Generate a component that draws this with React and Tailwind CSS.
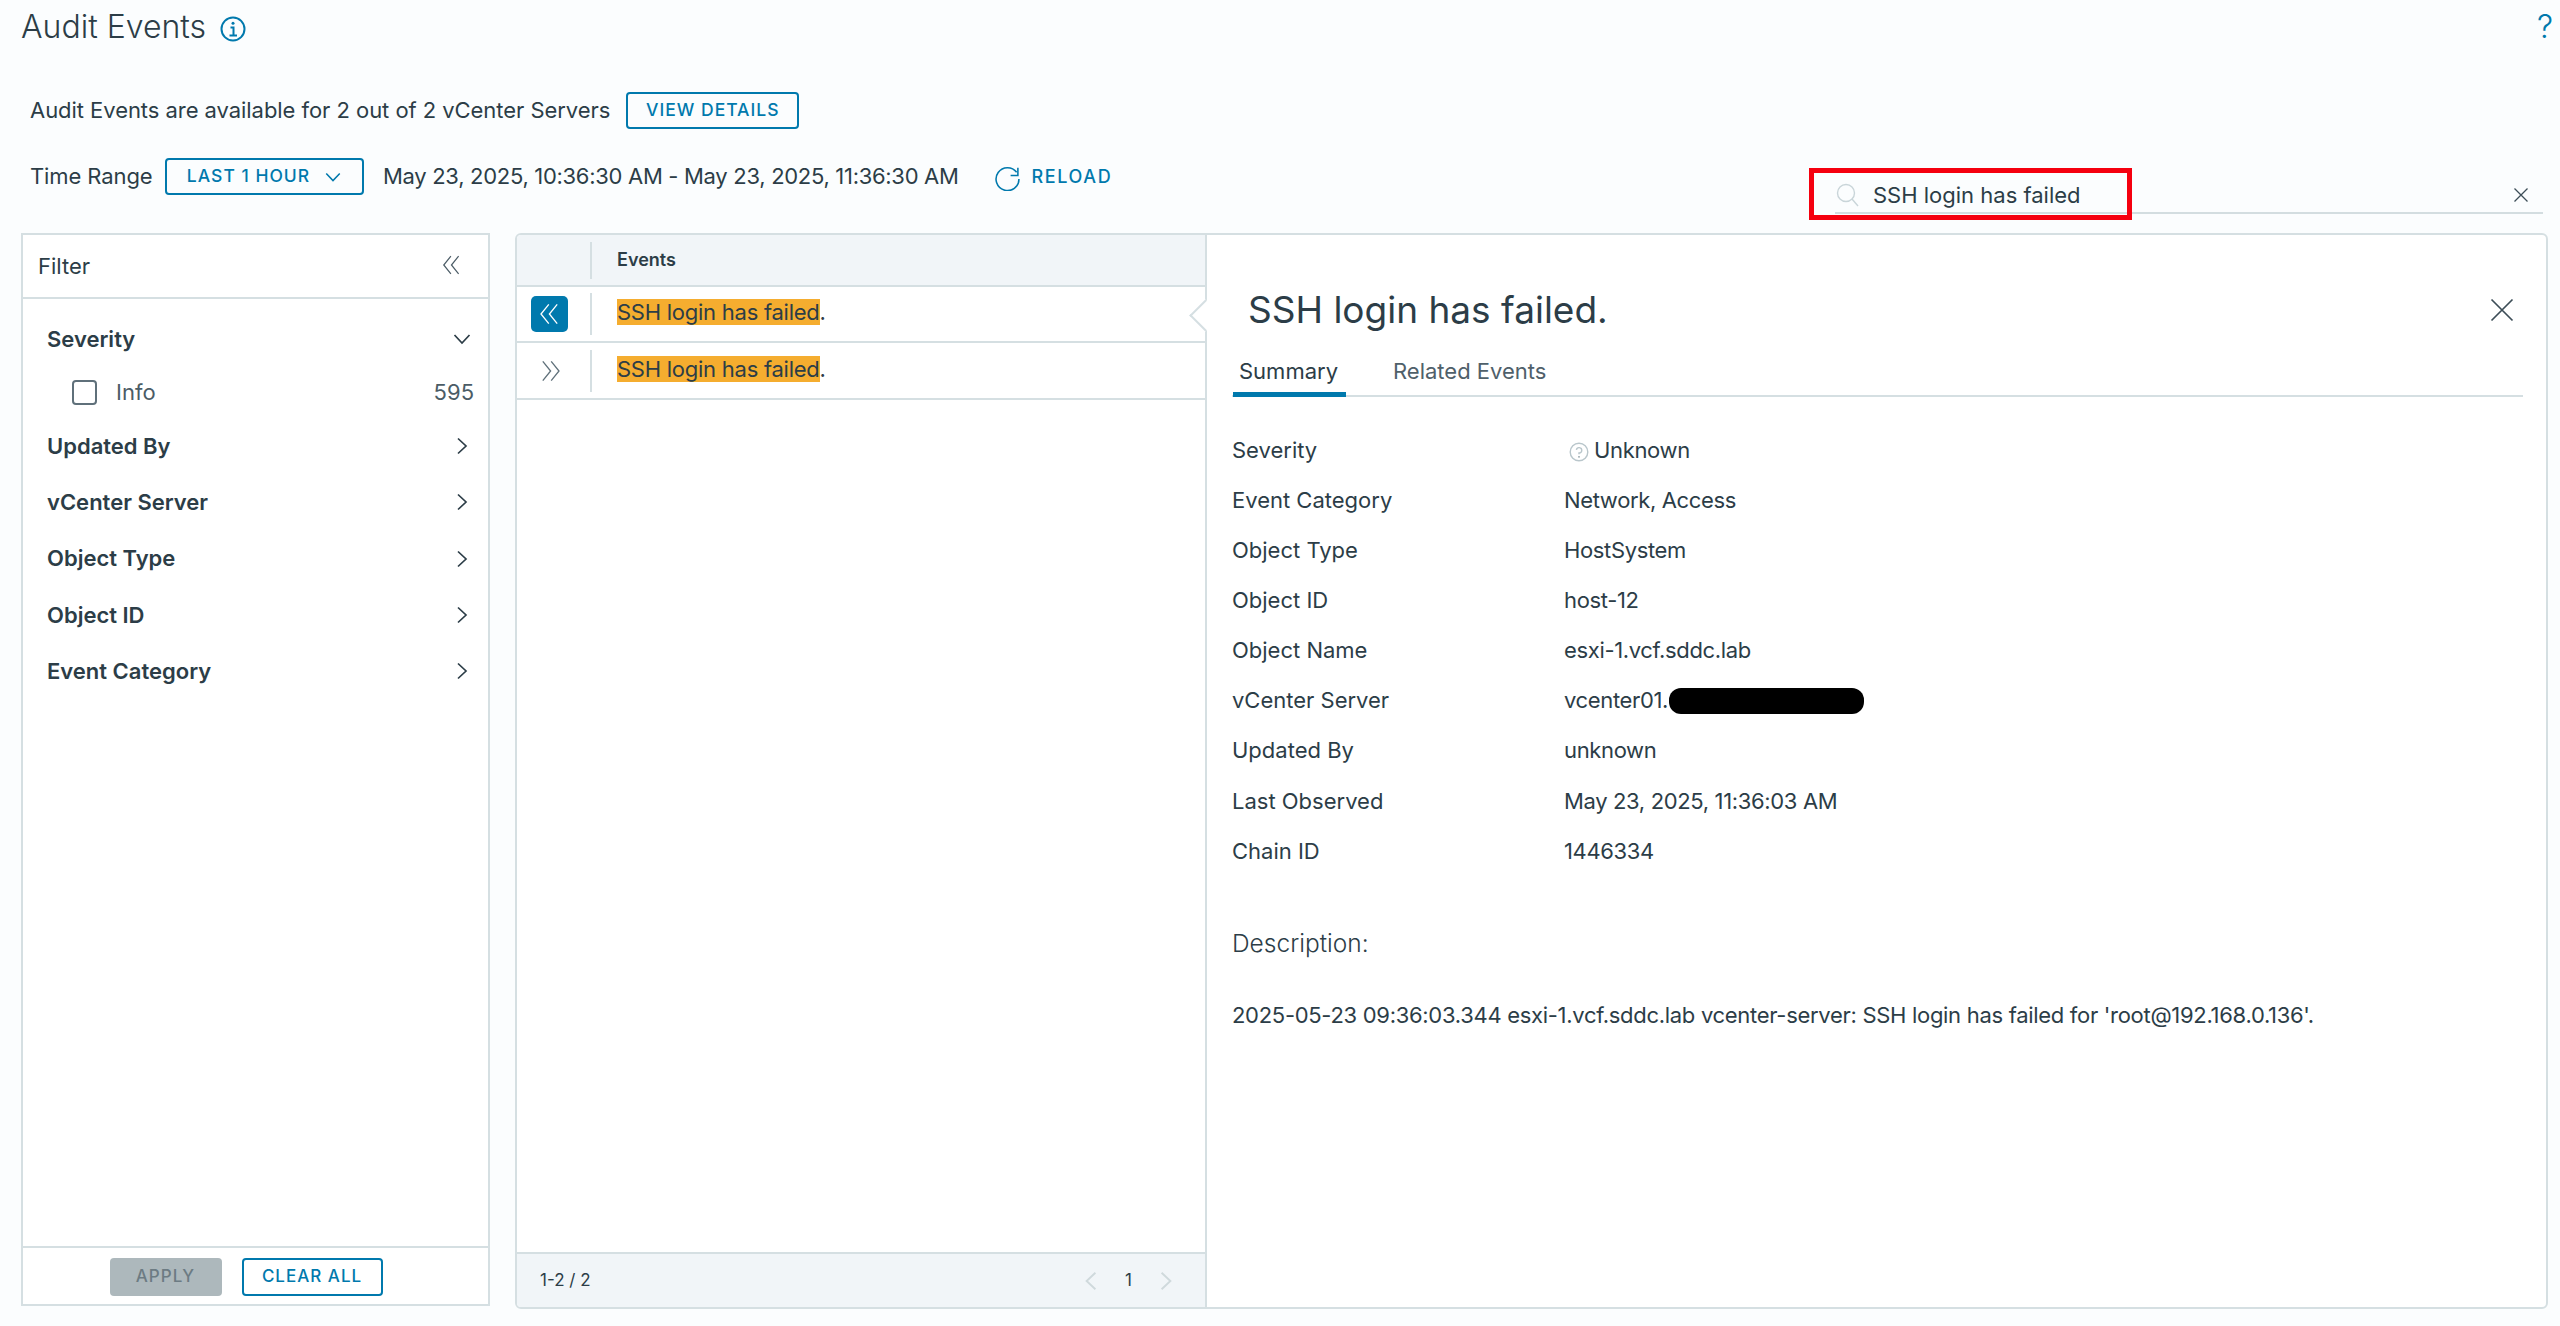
import React from 'react';

const rows = [
    ['Event Category', 'Network, Access'],
    ['Object Type', 'HostSystem'],
    ['Object ID', 'host-12'],
    ['Object Name', 'esxi-1.vcf.sddc.lab'],
];

const rowsAfter = [
    ['Updated By', 'unknown'],
    ['Last Observed', 'May 23, 2025, 11:36:03 AM'],
    ['Chain ID', '1446334'],
];

const filters = ['Updated By', 'vCenter Server', 'Object Type', 'Object ID', 'Event Category'];

function DoubleChevron({ className }) {
    return (
        <svg viewBox="0 0 20 20" fill="none" stroke="currentColor" strokeWidth="1.1" className={className}>
            <path d="M9 2 L2.5 10 L9 18" />
            <path d="M16 2 L9.5 10 L16 18" />
        </svg>
    );
}

function Chevron({ className }) {
    return (
        <svg viewBox="0 0 20 20" fill="none" stroke="currentColor" strokeWidth="1.7" className={className}>
            <path d="M6 2.5 L14 10 L6 17.5" />
        </svg>
    );
}

function Label({ name, value }) {
    return (
        <>
            <div className="flex items-center">{name}</div>
            <div className="flex items-center tracking-[-0.35px]">{value}</div>
        </>
    );
}

export default function App() {
    return (
        <div className="flex h-[1326px] w-full flex-col overflow-hidden bg-[#fbfdfe] font-['Inter',sans-serif] text-[22px] text-[#2c3d47]">
            <div className="flex h-[92px] items-start justify-between pr-[7px] pl-[21px]">
                <div className="flex items-center pt-[8px]">
                    <span className="text-[32px] leading-[38px] font-light">Audit Events</span>
                    <svg viewBox="0 0 26 26" fill="none" stroke="#0079ad" strokeWidth="2" className="mt-[3px] ml-[14px] h-[26px] w-[26px]">
                        <circle cx="13" cy="13" r="11.5" />
                        <path d="M10.5 11.5 H13.5 V19.5 M9.5 19.5 H17" />
                        <circle cx="13" cy="7.3" r="1.5" fill="#0079ad" stroke="none" />
                    </svg>
                </div>
                <span className="pt-[8px] text-[32px] leading-[38px] font-light text-[#0079ad]">?</span>
            </div>

            <div className="flex h-[37px] items-center pl-[30px]">
                <span className="tracking-[-0.05px]">Audit Events are available for 2 out of 2 vCenter Servers</span>
                <button className="ml-[16px] h-[37px] w-[173px] rounded-[4px] border-2 border-[#0079ad] text-[17.5px] font-medium tracking-[1px] text-[#0079ad]">VIEW DETAILS</button>
            </div>

            <div className="mt-[29px] flex h-[75px] items-start justify-between pr-[17px] pl-[30px]">
                <div className="flex h-[37px] items-center">
                    <span className="w-[123px] flex-none tracking-[-0.1px]">Time Range</span>
                    <button className="ml-[12px] flex h-[37px] w-[199px] items-center justify-center gap-[14px] rounded-[4px] border-2 border-[#0079ad] text-[17.5px] font-medium tracking-[1px] text-[#0079ad]">
                        LAST 1 HOUR
                        <Chevron className="h-[18px] w-[18px] rotate-90" />
                    </button>
                    <span className="ml-[19px] tracking-[-0.3px]">May 23, 2025, 10:36:30 AM - May 23, 2025, 11:36:30 AM</span>
                    <svg viewBox="0 0 26 26" fill="none" stroke="#0079ad" strokeWidth="1.5" className="mt-[1px] ml-[35px] h-[27px] w-[27px]">
                        <path d="M23 3.5 V11 H16" />
                        <path d="M21.8 8 A11 11 0 1 0 24 14.5" />
                    </svg>
                    <span className="ml-[11px] text-[18px] font-medium tracking-[1.6px] text-[#0079ad]">RELOAD</span>
                </div>
                <div className="relative mt-[19px] flex h-[37px] w-[708px] items-center border-b-2 border-[#d3dde0]">
                    <svg viewBox="0 0 24 24" fill="none" stroke="#c9d5d9" strokeWidth="1.4" className="ml-[1px] h-[24px] w-[24px]">
                        <circle cx="10" cy="10" r="8.5" />
                        <path d="M16 16 L22 23" />
                    </svg>
                    <span className="ml-[13px] flex-1 pt-[2px]">SSH login has failed</span>
                    <svg viewBox="0 0 16 16" fill="none" stroke="#3c4d57" strokeWidth="1.3" className="mr-[14px] h-[16px] w-[16px]">
                        <path d="M1.5 1.5 L14.5 14.5 M14.5 1.5 L1.5 14.5" />
                    </svg>
                    <div className="absolute top-[-9px] left-[-26px] h-[52px] w-[323px] border-[5px] border-[#f5000f]" />
                </div>
            </div>

            <div className="flex items-start gap-[25px] pr-[12px] pl-[21px]">
                <div className="flex h-[1073px] w-[469px] flex-none flex-col border-2 border-[#d5dfe2] bg-white">
                    <div className="flex h-[64px] flex-none items-center justify-between border-b-2 border-[#d5dfe2] pr-[25px] pl-[15px]">
                        <span>Filter</span>
                        <DoubleChevron className="mb-[2px] h-[22px] w-[22px] text-[#4b5c66]" />
                    </div>
                    <div className="flex-1 pt-[12px] pr-[14px] pl-[24px]">
                        <div className="flex h-[56px] items-center justify-between font-semibold">
                            Severity
                            <Chevron className="mr-[2px] h-[20px] w-[20px] rotate-90" />
                        </div>
                        <div className="flex h-[51px] items-center justify-between pb-[1px] text-[#4b5c66]">
                            <div className="flex items-center">
                                <span className="ml-[25px] h-[25px] w-[25px] rounded-[4px] border-2 border-[#5f707a]" />
                                <span className="ml-[19px]">Info</span>
                            </div>
                            <span>595</span>
                        </div>
                        {filters.map(name => (
                            <div key={name} className="flex h-[56.3px] items-center justify-between font-semibold">
                                {name}
                                <Chevron className="mr-[2px] h-[20px] w-[20px]" />
                            </div>
                        ))}
                    </div>
                    <div className="flex h-[58px] flex-none items-center justify-center gap-[20px] border-t-2 border-[#d5dfe2] pt-[2px] pr-[19px]">
                        <button className="h-[38px] w-[112px] rounded-[4px] bg-[#adb8bc] text-[17px] font-medium tracking-[1px] text-[#6c7b83]">APPLY</button>
                        <button className="h-[38px] w-[141px] rounded-[4px] border-2 border-[#0079ad] text-[17px] font-medium tracking-[1px] text-[#0079ad]">CLEAR ALL</button>
                    </div>
                </div>

                <div className="flex h-[1076px] flex-1 overflow-hidden rounded-[6px] border-2 border-[#d5dfe2] bg-white">
                    <div className="flex w-[688px] flex-none flex-col">
                        <div className="flex h-[52px] flex-none items-center border-b-2 border-[#d5dfe2] bg-[#f1f5f8]">
                            <span className="ml-[73px] h-[37px] w-[2px] bg-[#d5dfe2]" />
                            <span className="mb-[1px] ml-[25px] text-[18px] font-semibold">Events</span>
                        </div>
                        <div className="flex h-[56px] flex-none items-center border-b-2 border-[#d5dfe2]">
                            <span className="ml-[14px] flex h-[36px] w-[37px] items-center justify-center rounded-[5px] bg-[#0079ad] text-white">
                                <DoubleChevron className="h-[24px] w-[24px]" />
                            </span>
                            <span className="ml-[22px] h-[42px] w-[2px] bg-[#d5dfe2]" />
                            <span className="mb-[3px] ml-[25px] tracking-[-0.25px]"><mark className="bg-[#f5ad2f] text-[#2c3d47]">SSH login has failed</mark>.</span>
                        </div>
                        <div className="flex h-[57px] flex-none items-center border-b-2 border-[#d5dfe2]">
                            <span className="ml-[14px] flex h-[36px] w-[37px] items-center justify-center text-[#5f707a]">
                                <DoubleChevron className="h-[24px] w-[24px] rotate-180" />
                            </span>
                            <span className="ml-[22px] h-[42px] w-[2px] bg-[#d5dfe2]" />
                            <span className="mb-[3px] ml-[25px] tracking-[-0.25px]"><mark className="bg-[#f5ad2f] text-[#2c3d47]">SSH login has failed</mark>.</span>
                        </div>
                        <div className="flex-1" />
                        <div className="flex h-[55px] flex-none items-center justify-between border-t-2 border-[#d5dfe2] bg-[#f1f5f8] pr-[28px] pl-[23px] text-[17px]">
                            <span>1-2 / 2</span>
                            <div className="flex items-center text-[#cfd9dc]">
                                <Chevron className="h-[22px] w-[22px] rotate-180" />
                                <span className="mx-[23px] text-[#2c3d47]">1</span>
                                <Chevron className="h-[22px] w-[22px]" />
                            </div>
                        </div>
                    </div>

                    <div className="relative flex-1 border-l-2 border-[#d5dfe2] pr-[23px] pl-[25px]">
                        <div className="flex items-center justify-between pt-[53px] pr-[9px] pl-[16px]">
                            <span className="text-[37px] leading-[44px] font-normal">SSH login has failed.</span>
                            <svg viewBox="0 0 24 24" fill="none" stroke="#3c4d57" strokeWidth="1.7" className="h-[24px] w-[24px]">
                                <path d="M1.5 1.5 L22.5 22.5 M22.5 1.5 L1.5 22.5" />
                            </svg>
                        </div>
                        <div className="mt-[21px] flex h-[44px] border-b-2 border-[#d5dfe2] pl-[1px]">
                            <span className="h-[44px] w-[113px] border-b-[5px] border-[#0079ad] px-[6px] pt-[2px]">Summary</span>
                            <span className="ml-[47px] pt-[2px] text-[#4f606a]">Related Events</span>
                        </div>
                        <div className="mt-[28px] grid grid-cols-[332px_1fr] auto-rows-[50.15px]">
                            <Label
                                name="Severity"
                                value={
                                    <>
                                        <svg viewBox="0 0 20 20" fill="none" stroke="#b9c6cb" strokeWidth="1.4" className="mt-[3px] ml-[5px] h-[20px] w-[20px]">
                                            <circle cx="10" cy="10" r="8.8" />
                                            <path d="M7.4 7.8 A2.7 2.7 0 1 1 10 11 V12.3" />
                                            <circle cx="10" cy="14.8" r="0.9" fill="#8e9ea5" stroke="none" />
                                        </svg>
                                        <span className="ml-[5px]">Unknown</span>
                                    </>
                                }
                            />
                            {rows.map(([name, value]) => (
                                <Label key={name} name={name} value={value} />
                            ))}
                            <Label
                                name="vCenter Server"
                                value={
                                    <>
                                        <span>vcenter01.</span>
                                        <span className="ml-[1px] h-[26px] w-[195px] rounded-[12px] bg-black" />
                                    </>
                                }
                            />
                            {rowsAfter.map(([name, value]) => (
                                <Label key={name} name={name} value={value} />
                            ))}
                        </div>
                        <div className="mt-[52px] text-[24.5px] leading-[30px] font-light">Description:</div>
                        <div className="mt-[42px] leading-[30px] tracking-[-0.3px]">2025-05-23 09:36:03.344 esxi-1.vcf.sddc.lab vcenter-server: SSH login has failed for 'root@192.168.0.136'.</div>
                        <span className="absolute top-[69px] left-[-13px] h-[23px] w-[23px] rotate-45 border-b-2 border-l-2 border-[#d5dfe2] bg-white" />
                    </div>
                </div>
            </div>
        </div>
    );
}
